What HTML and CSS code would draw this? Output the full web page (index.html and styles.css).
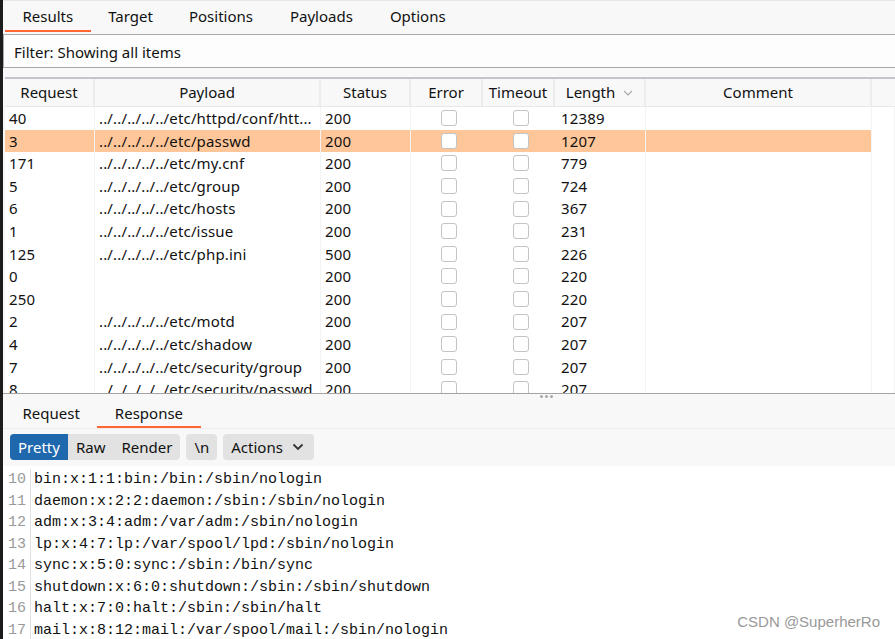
FILE: index.html
```html
<!DOCTYPE html>
<html>
<head>
<meta charset="utf-8">
<link rel="stylesheet" href="styles.css">
</head>
<body>
<div class="app">
  <div class="main">
    <nav class="tabs top-tabs">
      <span class="tab active">Results</span>
      <span class="tab">Target</span>
      <span class="tab">Positions</span>
      <span class="tab">Payloads</span>
      <span class="tab">Options</span>
    </nav>
    <div class="filter">Filter: Showing all items</div>
    <div class="table">
      <div class="row head">
        <div class="c">Request</div>
        <div class="c">Payload</div>
        <div class="c">Status</div>
        <div class="c">Error</div>
        <div class="c">Timeout</div>
        <div class="c">Length <svg class="sort" width="10" height="6" viewBox="0 0 10 6"><path d="M1 1l4 4 4-4" fill="none" stroke="#a8a8a8" stroke-width="1.1"/></svg></div>
        <div class="c">Comment</div>
        <div class="c"></div>
      </div>
      <div class="body">
        <div class="row"><div class="c">40</div><div class="c">../../../../../etc/httpd/conf/htt...</div><div class="c">200</div><div class="c"><i class="cb"></i></div><div class="c"><i class="cb"></i></div><div class="c">12389</div><div class="c"></div><div class="c"></div></div>
        <div class="row sel"><div class="c">3</div><div class="c">../../../../../etc/passwd</div><div class="c">200</div><div class="c"><i class="cb"></i></div><div class="c"><i class="cb"></i></div><div class="c">1207</div><div class="c"></div><div class="c"></div></div>
        <div class="row"><div class="c">171</div><div class="c">../../../../../etc/my.cnf</div><div class="c">200</div><div class="c"><i class="cb"></i></div><div class="c"><i class="cb"></i></div><div class="c">779</div><div class="c"></div><div class="c"></div></div>
        <div class="row"><div class="c">5</div><div class="c">../../../../../etc/group</div><div class="c">200</div><div class="c"><i class="cb"></i></div><div class="c"><i class="cb"></i></div><div class="c">724</div><div class="c"></div><div class="c"></div></div>
        <div class="row"><div class="c">6</div><div class="c">../../../../../etc/hosts</div><div class="c">200</div><div class="c"><i class="cb"></i></div><div class="c"><i class="cb"></i></div><div class="c">367</div><div class="c"></div><div class="c"></div></div>
        <div class="row"><div class="c">1</div><div class="c">../../../../../etc/issue</div><div class="c">200</div><div class="c"><i class="cb"></i></div><div class="c"><i class="cb"></i></div><div class="c">231</div><div class="c"></div><div class="c"></div></div>
        <div class="row"><div class="c">125</div><div class="c">../../../../../etc/php.ini</div><div class="c">500</div><div class="c"><i class="cb"></i></div><div class="c"><i class="cb"></i></div><div class="c">226</div><div class="c"></div><div class="c"></div></div>
        <div class="row"><div class="c">0</div><div class="c"></div><div class="c">200</div><div class="c"><i class="cb"></i></div><div class="c"><i class="cb"></i></div><div class="c">220</div><div class="c"></div><div class="c"></div></div>
        <div class="row"><div class="c">250</div><div class="c"></div><div class="c">200</div><div class="c"><i class="cb"></i></div><div class="c"><i class="cb"></i></div><div class="c">220</div><div class="c"></div><div class="c"></div></div>
        <div class="row"><div class="c">2</div><div class="c">../../../../../etc/motd</div><div class="c">200</div><div class="c"><i class="cb"></i></div><div class="c"><i class="cb"></i></div><div class="c">207</div><div class="c"></div><div class="c"></div></div>
        <div class="row"><div class="c">4</div><div class="c">../../../../../etc/shadow</div><div class="c">200</div><div class="c"><i class="cb"></i></div><div class="c"><i class="cb"></i></div><div class="c">207</div><div class="c"></div><div class="c"></div></div>
        <div class="row"><div class="c">7</div><div class="c">../../../../../etc/security/group</div><div class="c">200</div><div class="c"><i class="cb"></i></div><div class="c"><i class="cb"></i></div><div class="c">207</div><div class="c"></div><div class="c"></div></div>
        <div class="row"><div class="c">8</div><div class="c">../../../../../etc/security/passwd</div><div class="c">200</div><div class="c"><i class="cb"></i></div><div class="c"><i class="cb"></i></div><div class="c">207</div><div class="c"></div><div class="c"></div></div>
      </div>
    </div>
    <div class="splitter"><span class="dots"><i></i><i></i><i></i></span></div>
    <nav class="tabs sub-tabs">
      <span class="tab">Request</span>
      <span class="tab active">Response</span>
    </nav>
    <div class="toolbar">
      <div class="group">
        <span class="btn on">Pretty</span>
        <span class="btn">Raw</span>
        <span class="btn">Render</span>
      </div>
      <span class="btn solo">\n</span>
      <span class="btn solo actions">Actions <svg width="12" height="8" viewBox="0 0 12 8"><path d="M1.5 1.5l4.5 4.5 4.5-4.5" fill="none" stroke="#333" stroke-width="1.8"/></svg></span>
    </div>
    <div class="code">
      <div class="ln"><span class="num">10</span><span class="txt">bin:x:1:1:bin:/bin:/sbin/nologin</span></div>
      <div class="ln"><span class="num">11</span><span class="txt">daemon:x:2:2:daemon:/sbin:/sbin/nologin</span></div>
      <div class="ln"><span class="num">12</span><span class="txt">adm:x:3:4:adm:/var/adm:/sbin/nologin</span></div>
      <div class="ln"><span class="num">13</span><span class="txt">lp:x:4:7:lp:/var/spool/lpd:/sbin/nologin</span></div>
      <div class="ln"><span class="num">14</span><span class="txt">sync:x:5:0:sync:/sbin:/bin/sync</span></div>
      <div class="ln"><span class="num">15</span><span class="txt">shutdown:x:6:0:shutdown:/sbin:/sbin/shutdown</span></div>
      <div class="ln"><span class="num">16</span><span class="txt">halt:x:7:0:halt:/sbin:/sbin/halt</span></div>
      <div class="ln"><span class="num">17</span><span class="txt">mail:x:8:12:mail:/var/spool/mail:/sbin/nologin</span></div>
    </div>
  </div>
  <div class="watermark">CSDN @SuperherRo</div>
</div>
</body>
</html>
```
FILE: styles.css
```css
* { box-sizing: border-box; }
html, body { margin: 0; padding: 0; }
body {
  width: 895px;
  height: 639px;
  overflow: hidden;
  background: #ffffff;
  font-family: "Noto Sans", "Open Sans", sans-serif;
  color: #111111;
}
.app {
  position: relative;
  width: 895px;
  height: 639px;
  border-left: 3px solid #1c1c1c;
  background: #f8f8f8;
}
.main {
  display: flex;
  flex-direction: column;
  height: 100%;
  overflow: hidden;
}
.main > * { flex-shrink: 0; }
.tabs {
  display: flex;
  padding-left: 2px;
  font-size: 15px;
}
.tab {
  padding: 0 17.5px;
  display: flex;
  align-items: center;
  border-bottom: 2px solid transparent;
}
.tab.active { border-bottom-color: #ff6633; }
.top-tabs {
  height: 32px;
  padding-top: 1px;
  border-top: 1px solid #e6e6e6;
}
.top-tabs .tab:nth-child(3), .top-tabs .tab:nth-child(4), .top-tabs .tab:nth-child(5) { padding: 0 18.5px; }
.filter {
  margin: 2px 0 0 0;
  height: 34px;
  border: 1px solid #a9a9a9;
  border-right: none;
  background: #fdfdfd;
  font-size: 15px;
  padding: 1px 0 0 10px;
  display: flex;
  align-items: center;
}
.table {
  margin-top: 9px;
  margin-left: 2px;
  height: 316px;
  border-top: 2px solid #c4c4d0;
  background: #ffffff;
  display: flex;
  flex-direction: column;
  overflow: hidden;
}
.row {
  display: grid;
  grid-template-columns: 90px 226px 90px 72px 72px 91px 226px 1fr;
  height: 22.6px;
  flex-shrink: 0;
  font-size: 15px;
  line-height: 22.6px;
  letter-spacing: 0.15px;
}
.row .c {
  padding-left: 4px;
  white-space: nowrap;
  overflow: hidden;
  border-right: 1px solid #f3f3f3;
}
.row .c:nth-child(6) { padding-left: 6px; }
.row .c:nth-child(4), .row .c:nth-child(5) { border-right-color: transparent; }
.row.head {
  height: 28px;
  line-height: 27px;
  background: #f8f8f8;
  border-bottom: 1px solid #e8e8e8;
  letter-spacing: 0;
}
.row.head .c {
  padding-left: 0;
  text-align: center;
  border-right: 2px solid #ececec;
  margin: 0;
}
.row.head .c:nth-child(8) { border-right: none; }
.sort { margin-left: 4px; vertical-align: 2px; }
.body { flex: 1; overflow: hidden; }
.row.sel { background: #ffc799; }
.row.sel .c:nth-child(8) { background: #ffffff; }
.row .c:nth-child(4), .row .c:nth-child(5) {
  padding-left: 4px;
  display: flex;
  align-items: center;
  justify-content: center;
}
.row.head .c:nth-child(4), .row.head .c:nth-child(5) { padding-left: 0; }
.cb {
  display: block;
  width: 16px;
  height: 16px;
  border: 1.5px solid #c4c4c4;
  border-radius: 3px;
  background: #ffffff;
}
.splitter {
  height: 7px;
  border-top: 1px solid #a4a4a4;
  background: #f8f8f8;
  position: relative;
}
.dots {
  position: absolute;
  left: 537px;
  top: 1px;
  display: flex;
  gap: 2px;
}
.dots i {
  display: block;
  width: 3px;
  height: 3px;
  border-radius: 50%;
  background: #a8a8a8;
}
.sub-tabs {
  height: 29px;
  border-bottom: 1px solid #ececec;
}
.toolbar {
  display: flex;
  gap: 6px;
  padding: 5px 0 0 7px;
  height: 37px;
  align-items: flex-start;
  font-size: 15px;
}
.group {
  display: flex;
  background: #e2e2e2;
  border-radius: 4px;
  overflow: hidden;
  height: 26px;
}
.btn {
  height: 26px;
  display: flex;
  align-items: center;
  padding: 0 8px;
  color: #111111;
}
.btn.on {
  background: #1f68ad;
  color: #ffffff;
}
.btn.solo {
  background: #e2e2e2;
  border-radius: 4px;
}
.actions { padding-right: 10px; }
.actions svg { margin-left: 9px; }
.code {
  flex: 1 0 auto;
  background: #ffffff;
  padding-top: 3px;
  font-family: "Liberation Mono", "DejaVu Sans Mono", monospace;
  font-size: 15px;
}
.ln {
  display: flex;
  height: 21.5px;
  line-height: 21.5px;
}
.num {
  width: 28px;
  padding-left: 5px;
  color: #9a9a9a;
  border-right: 1px solid #e0e0e0;
}
.txt {
  padding-left: 3px;
  color: #111;
  white-space: pre;
}
.watermark {
  position: absolute;
  right: 15px;
  bottom: 9px;
  font-family: "Liberation Sans", Arial, sans-serif;
  font-size: 15px;
  color: #999999;
}
```
